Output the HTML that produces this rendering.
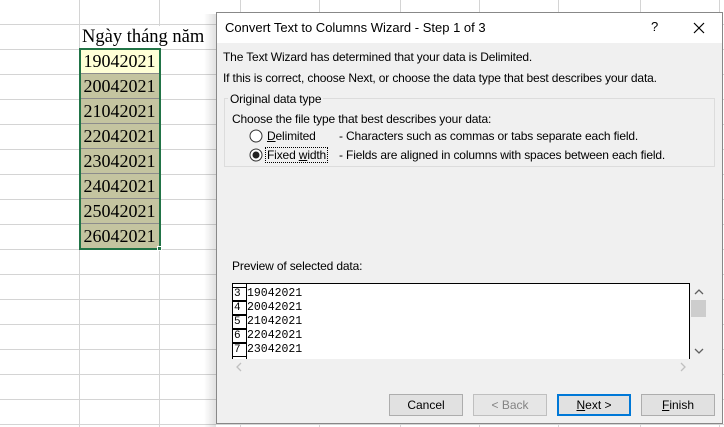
<!DOCTYPE html>
<html><head><meta charset="utf-8"><style>
*{margin:0;padding:0;box-sizing:border-box}
body{width:724px;height:427px;overflow:hidden;background:#fff;position:relative;font-family:"Liberation Sans",sans-serif}
.a{position:absolute}
.hl{position:absolute;left:0;width:724px;height:1px;background:#d4d4d4}
.vl{position:absolute;top:0;width:1px;height:427px;background:#d4d4d4}
.cell{position:absolute;left:80px;width:79px;height:25px;font-family:"Liberation Serif",serif;font-size:18px;text-align:center;line-height:25px;color:#000;background:#c4c4a0;border-bottom:1px solid #8c8c8c}
.t{position:absolute;font-size:12px;letter-spacing:-0.15px;color:#000;white-space:nowrap}
.btn{position:absolute;top:394px;width:74px;height:22px;background:#e1e1e1;border:1px solid #adadad;font-size:12px;text-align:center;line-height:20px}
.pv{position:absolute;left:232px;width:15px;height:14px;border:1px solid #000;border-left:none;font-family:"Liberation Mono",monospace;font-size:11px;line-height:13px;padding-left:2px}
.pt{position:absolute;left:247px;font-family:"Liberation Mono",monospace;font-size:11.5px;line-height:14px}
</style></head><body>
<div class="hl" style="top:24px"></div><div class="hl" style="top:49px"></div><div class="hl" style="top:74px"></div><div class="hl" style="top:99px"></div><div class="hl" style="top:124px"></div><div class="hl" style="top:149px"></div><div class="hl" style="top:174px"></div><div class="hl" style="top:199px"></div><div class="hl" style="top:224px"></div><div class="hl" style="top:249px"></div><div class="hl" style="top:274px"></div><div class="hl" style="top:299px"></div><div class="hl" style="top:324px"></div><div class="hl" style="top:349px"></div><div class="hl" style="top:374px"></div><div class="hl" style="top:399px"></div><div class="hl" style="top:424px"></div>
<div class="vl" style="left:79px"></div><div class="vl" style="left:159px"></div><div class="vl" style="left:240px"></div><div class="vl" style="left:319px"></div><div class="vl" style="left:400px"></div><div class="vl" style="left:479px"></div><div class="vl" style="left:558px"></div><div class="vl" style="left:640px"></div><div class="vl" style="left:719px"></div>
<div class="a" style="left:82px;top:26px;font-family:'Liberation Serif',serif;font-size:18.5px;background:#fff;width:134px;height:22px;line-height:22px">Ngày tháng năm</div>
<div class="cell" style="top:49px;background:#ffffd6">19042021</div>
<div class="cell" style="top:74px">20042021</div>
<div class="cell" style="top:99px">21042021</div>
<div class="cell" style="top:124px">22042021</div>
<div class="cell" style="top:149px">23042021</div>
<div class="cell" style="top:174px">24042021</div>
<div class="cell" style="top:199px">25042021</div>
<div class="cell" style="top:224px">26042021</div>
<div class="a" style="left:79px;top:48px;width:82px;height:202px;border:2px solid #217346"></div>
<div class="a" style="left:157px;top:246px;width:5px;height:5px;background:#217346;border:1px solid #fff"></div>
<div class="a" style="left:204px;top:14px;width:12px;height:413px;background:linear-gradient(to right,rgba(0,0,0,0),rgba(0,0,0,0.12))"></div>
<div class="a" style="left:216px;top:12px;width:507px;height:412px;background:#f0f0f0;border:1px solid #888"></div>
<div class="a" style="left:217px;top:13px;width:505px;height:30px;background:#fff"></div>
<div class="t" style="left:225px;top:20px;font-size:13px;letter-spacing:0">Convert Text to Columns Wizard - Step 1 of 3</div>
<div class="t" style="left:651px;top:19px;font-size:13px">?</div>
<svg class="a" style="left:693px;top:22px" width="12" height="12"><path d="M1 1L11 11M11 1L1 11" stroke="#000" stroke-width="1.2"/></svg>
<div class="t" style="left:223px;top:50px">The Text Wizard has determined that your data is Delimited.</div>
<div class="t" style="left:223px;top:71px">If this is correct, choose Next, or choose the data type that best describes your data.</div>
<div class="a" style="left:224px;top:98px;width:491px;height:69px;border:1px solid #dcdcdc"></div>
<div class="t" style="left:228px;top:92px;background:#f0f0f0;padding:0 2px">Original data type</div>
<div class="t" style="left:232px;top:112px">Choose the file type that best describes your data:</div>
<svg class="a" style="left:249px;top:129px" width="14" height="14"><circle cx="7" cy="7" r="6" fill="#fff" stroke="#333"/></svg>
<div class="t" style="left:267px;top:129px"><u>D</u>elimited</div>
<div class="t" style="left:339px;top:129px">- Characters such as commas or tabs separate each field.</div>
<svg class="a" style="left:249px;top:148px" width="14" height="14"><circle cx="7" cy="7" r="6" fill="#fff" stroke="#333"/><circle cx="7" cy="7" r="3.5" fill="#222"/></svg>
<div class="t" style="left:265px;top:147px;border:1px dotted #000;padding:0 1px;line-height:14px">Fixed <u>w</u>idth</div>
<div class="t" style="left:339px;top:148px">- Fields are aligned in columns with spaces between each field.</div>
<div class="t" style="left:232px;top:259px">Preview of selected data:</div>
<div class="a" style="left:232px;top:283px;width:458px;height:76px;background:#fff;border:1px solid #000;border-bottom:none"></div>
<div class="a" style="left:246px;top:284px;width:1px;height:75px;background:#000"></div>
<div class="pv" style="top:287px">3</div><div class="pt" style="top:287px">19042021</div>
<div class="pv" style="top:301px">4</div><div class="pt" style="top:301px">20042021</div>
<div class="pv" style="top:315px">5</div><div class="pt" style="top:315px">21042021</div>
<div class="pv" style="top:329px">6</div><div class="pt" style="top:329px">22042021</div>
<div class="pv" style="top:343px">7</div><div class="pt" style="top:343px">23042021</div>
<div class="a" style="left:691px;top:300px;width:15px;height:17px;background:#cdcdcd"></div>
<svg class="a" style="left:694px;top:288px" width="10" height="8"><path d="M1 6L5 2L9 6" stroke="#606060" fill="none" stroke-width="1.3"/></svg>
<svg class="a" style="left:694px;top:347px" width="10" height="8"><path d="M1 2L5 6L9 2" stroke="#606060" fill="none" stroke-width="1.3"/></svg>
<svg class="a" style="left:235px;top:362px" width="8" height="10"><path d="M6 1L2 5L6 9" stroke="#c0c0c0" fill="none" stroke-width="1.3"/></svg>
<svg class="a" style="left:679px;top:362px" width="8" height="10"><path d="M2 1L6 5L2 9" stroke="#c0c0c0" fill="none" stroke-width="1.3"/></svg>
<div class="btn" style="left:389px">Cancel</div>
<div class="btn" style="left:473px;color:#838383;border-color:#bfbfbf;background:#e6e6e6">&lt; Back</div>
<div class="btn" style="left:557px;border:2px solid #0078d7;line-height:18px"><u>N</u>ext &gt;</div>
<div class="btn" style="left:641px"><u>F</u>inish</div>
</body></html>
